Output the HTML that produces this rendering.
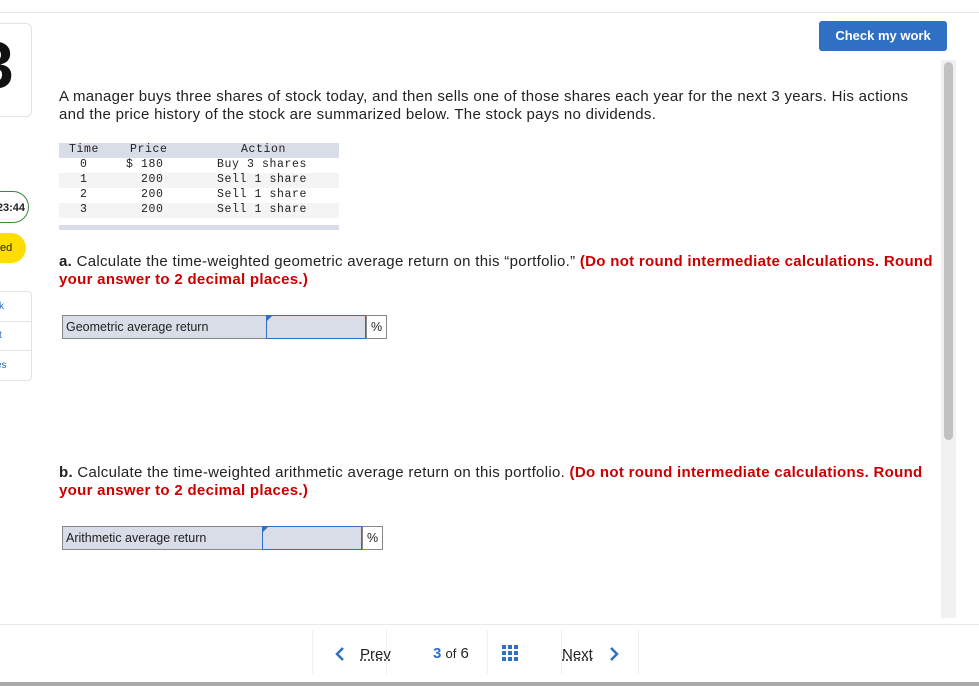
<!DOCTYPE html>
<html><head><style>
body{margin:0;width:979px;height:686px;position:relative;overflow:hidden;background:#fff;font-family:"Liberation Sans",sans-serif;color:#222}
.a{position:absolute}
.mono{font-family:"Liberation Mono",monospace;font-size:11.5px;letter-spacing:0.6px}
.red{color:#c00;font-weight:bold}
.q{font-size:15px;line-height:18px;white-space:nowrap;letter-spacing:0.3px}
.row{position:absolute;left:59px;width:280px;height:15px}
.row span{position:absolute;top:0px}
.box{position:absolute;height:22px;border:1px solid #888;background:#d9dde8;font-size:12.5px}
</style></head><body>
<div class="a" style="left:0;top:12px;width:979px;height:1px;background:#e6e6e6"></div>
<div class="a" style="left:-10px;top:23px;width:40px;height:92px;border:1px solid #e3e3e3;border-radius:6px;overflow:hidden"><div style="position:absolute;left:-14px;top:8px;font-size:66px;font-weight:bold;color:#111;line-height:66px">3</div></div>
<div class="a" style="left:-20px;top:191px;width:49px;height:32px;border:1px solid #3a8a3a;border-radius:16px;font-size:11px;font-weight:bold;line-height:32px;text-align:right;padding-right:3px;box-sizing:border-box">23:44</div>
<div class="a" style="left:-20px;top:233px;width:46px;height:30px;background:#ffdd00;border-radius:15px;font-size:11px;line-height:30px;padding-left:20px;box-sizing:border-box">ed</div>
<div class="a" style="left:-10px;top:291px;width:40px;height:88px;border:1px solid #e3e3e3;border-radius:4px;font-size:10px;color:#2b6cc0">
<div style="height:29px;line-height:29px;border-bottom:1px solid #e3e3e3;padding-left:8px">k</div>
<div style="height:28px;line-height:28px;border-bottom:1px solid #e3e3e3;padding-left:8px">t</div>
<div style="height:29px;line-height:29px">ces</div></div>

<div class="a" style="left:819px;top:21px;width:128px;height:30px;background:#2f6fc4;border-radius:3px;color:#fff;font-weight:bold;font-size:13px;line-height:30px;text-align:center">Check my work</div>
<div class="a" style="left:941px;top:60px;width:15px;height:558px;background:#f1f1f1"></div>
<div class="a" style="left:944px;top:62px;width:9px;height:378px;background:#c1c1c1;border-radius:5px"></div>

<div class="a q" style="left:59px;top:88px">A manager buys three shares of stock today, and then sells one of those shares each year for the next 3 years. His actions<br>and the price history of the stock are summarized below. The stock pays no dividends.</div>

<div class="row mono" style="top:143px;background:#d9dde8"><span style="left:10px">Time</span><span style="left:71px">Price</span><span style="left:182px">Action</span></div>
<div class="row mono" style="top:158px"><span style="left:21px">0</span><span style="left:67px">$ 180</span><span style="left:158px">Buy 3 shares</span></div>
<div class="row mono" style="top:173px;background:#f4f4f4"><span style="left:21px">1</span><span style="left:82px">200</span><span style="left:158px">Sell 1 share</span></div>
<div class="row mono" style="top:188px"><span style="left:21px">2</span><span style="left:82px">200</span><span style="left:158px">Sell 1 share</span></div>
<div class="row mono" style="top:203px;background:#f4f4f4"><span style="left:21px">3</span><span style="left:82px">200</span><span style="left:158px">Sell 1 share</span></div>
<div class="a" style="left:59px;top:225px;width:280px;height:5px;background:#d9dde8"></div>

<div class="a q" style="left:59px;top:253px"><b>a.</b> Calculate the time-weighted geometric average return on this “portfolio.” <span class="red">(Do not round intermediate calculations. Round</span><br><span class="red">your answer to 2 decimal places.)</span></div>
<div class="box" style="left:62px;top:315px;width:203px;line-height:22px;padding-left:3px">Geometric average return</div>
<div class="box" style="left:266px;top:315px;width:98px;border:1px solid #2f6fc4"><div style="position:absolute;left:0;top:0;border-left:5px solid #2f6fc4;border-bottom:5px solid transparent"></div></div>
<div class="box" style="left:366px;top:315px;width:19px;background:#fff;text-align:center;line-height:22px">%</div>

<div class="a q" style="left:59px;top:464px"><b>b.</b> Calculate the time-weighted arithmetic average return on this portfolio. <span class="red">(Do not round intermediate calculations. Round</span><br><span class="red">your answer to 2 decimal places.)</span></div>
<div class="box" style="left:62px;top:526px;width:199px;line-height:22px;padding-left:3px">Arithmetic average return</div>
<div class="box" style="left:262px;top:526px;width:98px;border:1px solid #2f6fc4"><div style="position:absolute;left:0;top:0;border-left:5px solid #2f6fc4;border-bottom:5px solid transparent"></div></div>
<div class="box" style="left:362px;top:526px;width:19px;background:#fff;text-align:center;line-height:22px">%</div>

<div class="a" style="left:0;top:624px;width:979px;height:1px;background:#e8e8e8"></div>
<div class="a" style="left:312px;top:630px;width:1px;height:44px;background:#eee"></div>
<div class="a" style="left:386px;top:630px;width:1px;height:44px;background:#eee"></div>
<div class="a" style="left:487px;top:630px;width:1px;height:44px;background:#eee"></div>
<div class="a" style="left:561px;top:630px;width:1px;height:44px;background:#eee"></div>
<div class="a" style="left:638px;top:630px;width:1px;height:44px;background:#eee"></div>
<svg class="a" style="left:334px;top:646px" width="12" height="16"><path d="M9 2L3 8l6 6" stroke="#2f6fc4" stroke-width="2.5" fill="none"/></svg>
<div class="a" style="left:360px;top:646px;font-size:15px;text-decoration:underline dotted">Prev</div>
<div class="a" style="left:433px;top:645px;font-size:15px"><b style="color:#2f6fc4">3</b> <span style="font-size:13px">of</span> 6</div>
<svg class="a" style="left:502px;top:645px" width="16" height="17"><g fill="#2f6fc4"><rect x="0" y="0" width="4" height="4"/><rect x="6" y="0" width="4" height="4"/><rect x="12" y="0" width="4" height="4"/><rect x="0" y="6" width="4" height="4"/><rect x="6" y="6" width="4" height="4"/><rect x="12" y="6" width="4" height="4"/><rect x="0" y="12" width="4" height="4"/><rect x="6" y="12" width="4" height="4"/><rect x="12" y="12" width="4" height="4"/></g></svg>
<div class="a" style="left:562px;top:646px;font-size:15px;text-decoration:underline dotted">Next</div>
<svg class="a" style="left:608px;top:646px" width="12" height="16"><path d="M3 2l6 6-6 6" stroke="#2f6fc4" stroke-width="2.5" fill="none"/></svg>
<div class="a" style="left:0;top:682px;width:979px;height:4px;background:#aaa"></div>
</body></html>
